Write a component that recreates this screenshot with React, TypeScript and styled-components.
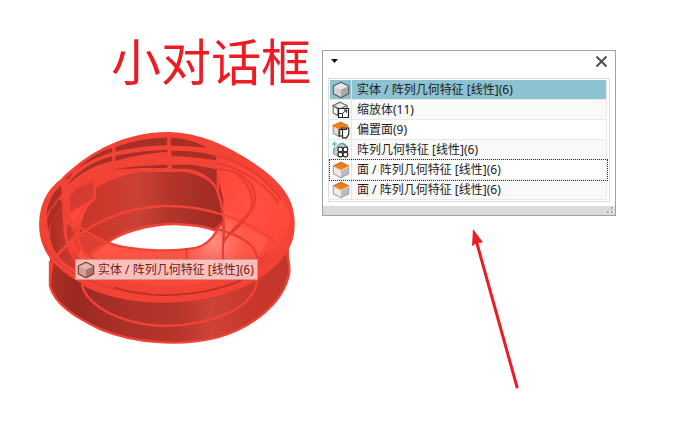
import React, { useState } from "react";
import styled, { createGlobalStyle } from "styled-components";

const GlobalStyle = createGlobalStyle`
  * { box-sizing: border-box; }
  body {
    margin: 0;
    background: #fff;
    color: #1c1c1c;
    font-family: "Noto Sans", "Noto Sans CJK SC", sans-serif;
    font-size: 12px;
    line-height: 18px;
  }
`;

const Page = styled.main`
  display: grid;
  grid-template-columns: minmax(0, 322fr) minmax(0, 294fr);
  padding-right: 60px;
  align-items: start;
`;

const Viewport = styled.section`
  display: flex;
  flex-direction: column;
  padding-top: 21px;
`;

const Title = styled.h1`
  margin: 0;
  padding-right: 11px;
  text-align: right;
  color: #ed1c24;
  font: 400 50px/76px "Noto Sans CJK SC", sans-serif;
  white-space: nowrap;
`;

const ModelStage = styled.div`
  position: relative;
  align-self: flex-start;
  margin: 27px 0 0 30px;
`;

const ModelDrawing = styled.svg`
  display: block;
  width: 270px;
  height: 226px;
`;

const HoverLabel = styled.div`
  position: absolute;
  left: 45px;
  top: 135px;
  display: flex;
  align-items: center;
  gap: 3px;
  height: 21px;
  padding: 0 3px 0 1px;
  border: 1px solid #c9968f;
  background: rgba(255, 222, 218, 0.78);
  color: #6b211c;
  white-space: nowrap;
`;

const Side = styled.section`
  padding-top: 50px;
`;

const Dialog = styled.div`
  border: 1px solid #a2a2a2;
  background: #fff;
`;

const DialogHeader = styled.header`
  display: flex;
  align-items: center;
  justify-content: space-between;
  height: 20px;
  padding: 0 7px;
`;

const IconButton = styled.button`
  display: flex;
  padding: 0;
  border: 0;
  background: none;
`;

const ListFrame = styled.div`
  margin: 7px 5px 4px;
  padding: 1px 2px 1px 1px;
  border: 1px solid #dcdcdc;
`;

const List = styled.ul`
  margin: 0;
  padding: 0;
  list-style: none;
`;

const Row = styled.button<{ $selected: boolean; $focused: boolean; $alt: boolean }>`
  display: grid;
  grid-template-columns: 22px minmax(0, 1fr);
  width: 100%;
  height: 20px;
  padding: 0;
  border: 0;
  border-right: 1px solid #e8e8e8;
  border-bottom: 1px solid #e8e8e8;
  background: ${(p) => (p.$selected ? "#8cc2d1" : p.$alt ? "#f9f9f9" : "#fff")};
  color: inherit;
  font: inherit;
  text-align: left;
  outline: ${(p) => (p.$focused ? "1px dotted #45232b" : "none")};
  position: relative;
  z-index: ${(p) => (p.$focused ? 1 : 0)};
`;

const IconCell = styled.span`
  display: flex;
  align-items: center;
  justify-content: center;
  border-right: 1px solid #e2e4e5;
`;

const Label = styled.span`
  padding-left: 5px;
  line-height: 19px;
  white-space: nowrap;
  overflow: hidden;
`;

const DialogFooter = styled.footer`
  display: flex;
  align-items: flex-end;
  justify-content: flex-end;
  height: 9px;
  background: #dadada;
`;

const Arrow = styled.svg`
  display: block;
  width: 52px;
  height: 168px;
  margin: 8px 0 0 50%;
`;

type IconKind = "solid" | "scale" | "offset" | "pattern" | "face";

function Cube({ top, left, right, stroke }: { top: string; left: string; right: string; stroke: string }) {
  return (
    <>
      <path d="M1.3 5 9 8.6V16.8L1.3 12.8Z" fill={left} />
      <path d="M16.7 5 9 8.6V16.8L16.7 12.8Z" fill={right} />
      <path d="M9 1.2 16.7 5 9 8.8 1.3 5Z" fill={top} />
      <path d="M9 1.2 16.7 5V12.8L9 16.8 1.3 12.8V5Z" fill="none" stroke={stroke} strokeWidth="1.1" strokeLinejoin="round" />
    </>
  );
}

function FeatureIcon({ kind, tinted = false }: { kind: IconKind; tinted?: boolean }) {
  return (
    <svg width="18" height="18" viewBox="0 0 18 18" aria-hidden="true">
      {kind === "solid" && (
        <Cube
          top={tinted ? "#e2b5b0" : "#e6e6e6"}
          left={tinted ? "#d19e98" : "#d2d2d2"}
          right={tinted ? "#ac736e" : "#a8a8a8"}
          stroke={tinted ? "#79332e" : "#5a5a5a"}
        />
      )}
      {kind === "face" && (
        <>
          <Cube top="#f0821a" left="#ececec" right="#bdbdbd" stroke="#a2a2a2" />
          <path d="M9 1.2 16.7 5 9 8.8 1.3 5Z" fill="#ee7f17" stroke="#b9692c" strokeWidth=".7" />
          <path d="M1.4 5.6 9 9.3 16.6 5.6" fill="none" stroke="#ffcb8c" strokeWidth="1.1" />
        </>
      )}
      {kind === "scale" && (
        <>
          <path d="M8 1.2 15 4.6 8 8 1.2 4.6Z" fill="#ececec" stroke="#666" strokeWidth="1.1" />
          <path d="M1.2 4.6V12L6 14.6V8.4Z" fill="#fff" stroke="#666" strokeWidth="1.1" />
          <path d="M15 4.6V7" stroke="#666" strokeWidth="1.1" />
          <path d="M6.5 7.5H16.5V16.5H6.5Z" fill="#fff" stroke="#222" strokeWidth="1.2" />
          <path d="M6.5 12.5H10.5V16.5M10.7 12.3 14.5 9M11.8 9H14.5V11.7" fill="none" stroke="#222" />
        </>
      )}
      {kind === "offset" && (
        <>
          <path d="M1.2 5V12.5L8 16V8Z" fill="#dedede" stroke="#888" />
          <path d="M8.5 1 15.8 4.3V6.5L8 8.5 1 5.5V4.3Z" fill="#ee7f17" stroke="#b9651f" strokeWidth=".7" />
          <path d="M1.3 5.8 7.5 8.8 15.5 5.8" fill="none" stroke="#ffcb8c" />
          <path d="M7 8.5H9.5V7H14M7 8.5V15H10" fill="none" stroke="#222" strokeWidth="1.2" />
          <path d="M10.5 8.5H14.5V7H16.8V13L14.5 16.8H10.5Z" fill="#fff" stroke="#222" strokeWidth="1.2" />
        </>
      )}
      {kind === "pattern" && (
        <>
          <path d="M4.5 5.5 9 2.5 15.5 5.5V12L9 16 1.5 13V9Z" fill="#cdcdcd" stroke="#999" />
          <path d="M5 5.5 10 8 15.5 5.5" fill="none" stroke="#777" />
          <path d="M2.5.5V5.5M0 3H5M6.5 3.5 11 2.2 14 4.5M2 7V10" fill="none" stroke="#3cacc4" strokeWidth="1.1" />
          {[[8.3, 8.4], [13.4, 8.4], [8.3, 13.5], [13.4, 13.5]].map(([x, y]) => (
            <circle key={`${x}-${y}`} cx={x} cy={y} r="2.4" fill="#fff" stroke="#222" strokeWidth="1.1" />
          ))}
        </>
      )}
    </svg>
  );
}

function RingModel() {
  return (
    <ModelDrawing viewBox="-12 -6 810 678" role="img" aria-label="环形实体模型">
      <defs>
        <linearGradient id="base" gradientUnits="userSpaceOnUse" x1="48" y1="0" x2="766" y2="0">
          <stop offset="0" stopColor="#ad3026" />
          <stop offset=".1" stopColor="#9b2921" />
          <stop offset=".4" stopColor="#b0332a" />
          <stop offset=".53" stopColor="#b5352b" />
          <stop offset=".68" stopColor="#ce4337" />
          <stop offset=".82" stopColor="#ca382c" />
          <stop offset="1" stopColor="#c2362b" />
        </linearGradient>
        <linearGradient id="wall" gradientUnits="userSpaceOnUse" x1="130" y1="0" x2="565" y2="0">
          <stop offset="0" stopColor="#c4362b" />
          <stop offset=".15" stopColor="#cc372b" />
          <stop offset=".42" stopColor="#ca4136" />
          <stop offset=".65" stopColor="#b3342a" />
          <stop offset="1" stopColor="#9f2b23" />
        </linearGradient>
        <linearGradient id="shade" gradientUnits="userSpaceOnUse" x1="45" y1="0" x2="200" y2="0">
          <stop offset="0" stopColor="#a52c23" />
          <stop offset=".4" stopColor="#cb382d" />
          <stop offset="1" stopColor="#ef4638" />
        </linearGradient>
        <linearGradient id="front" gradientUnits="userSpaceOnUse" x1="0" y1="350" x2="0" y2="500">
          <stop offset="0" stopColor="#ff5849" />
          <stop offset="1" stopColor="#f54538" />
        </linearGradient>
        <radialGradient id="side" gradientUnits="userSpaceOnUse" cx="650" cy="240" r="180">
          <stop offset="0" stopColor="#ff5043" />
          <stop offset=".6" stopColor="#ff493b" />
          <stop offset="1" stopColor="#f54437" />
        </radialGradient>
        <radialGradient id="shine" gradientUnits="userSpaceOnUse" cx="540" cy="345" r="130">
          <stop offset="0" stopColor="#ff8f82" />
          <stop offset=".5" stopColor="#ff6557" />
          <stop offset="1" stopColor="#ff4d3f" stopOpacity="0" />
        </radialGradient>
      </defs>

      <path d="M48 380V480C62 535 125 575 200 610C300 650 430 663 550 634C650 606 749 535 766 440C768 412 758 396 762 350Z" fill="url(#base)" />
      <path d="M48 405V480C62 535 125 575 200 610C300 650 430 663 550 634C650 606 749 535 766 440C768 412 758 396 762 360" fill="none" stroke="#f24235" strokeWidth="7" />
      <path d="M48 395C64 403 49 425 48 465M143 475C154 525 220 570 305 589C405 613 550 594 630 532C658 507 673 480 667 450" fill="none" stroke="#f24235" strokeWidth="7" />

      <path d="M405 18C500 20 590 60 688 131C748 178 780 222 782 286C783 327 775 356 756 380C706 454 614 490 530 511C433 532 329 533 240 509C134 481 54 424 30 366C16 336 13 303 17 270C23 223 44 188 80 160C170 69 283 17 405 18Z" fill="#f24336" />

      <path d="M548 95C606 100 690 152 745 220C776 266 774 300 742 355C681 410 604 430 550 430L552 320 568 260 548 130Z" fill="url(#side)" />
      <path d="M145 340C195 346 220 351 258 361C330 380 425 374 487 361C530 350 560 325 570 290L700 330C694 400 620 455 480 475C350 492 220 460 130 410Z" fill="url(#front)" />
      <path d="M445 372C495 360 530 345 550 320L569 235C630 250 670 300 670 370C635 435 525 478 445 455Z" fill="url(#shine)" />

      <path d="M82 178 88 199C65 222 50 246 36 269C43 226 57 199 82 178ZM79 219 86 235C64 260 54 283 43 317L39 282C47 254 60 233 79 219Z" fill="#aa2e25" />
      <path d="M48 320C51 280 66 250 84 235L96 250C89 290 88 324 96 352L66 390C49 370 44 345 48 320Z" fill="url(#shade)" />
      <path d="M102 293 136 319C120 326 111 339 104 346C96 329 96 310 102 293ZM66 396 104 359C116 384 130 398 150 405V440C119 430 86 415 66 396Z" fill="url(#shade)" />
      <path d="M132 322 214 351C189 362 174 376 162 390C128 365 110 350 132 322Z" fill="#dd3e32" />

      <g fill="#a92e25">
        <path d="M94 158 110 145 119 139 103 158Z" />
        <path d="M128 130C160 99 198 76 235 66V78C192 91 154 111 128 130Z" />
        <path d="M244 64C294 44 350 35 400 35V58C343 59 291 67 244 77Z" />
        <path d="M410 35C455 36 495 51 520 65C486 62 451 60 410 59Z" />
        <path d="M99 178C143 137 188 115 235 105V91C176 106 128 137 99 178Z" />
        <path d="M244 90C300 78 350 73 401 72V77C348 81 295 89 244 105Z" />
        <path d="M412 74C462 74 505 77 544 89L548 103C506 96 462 91 412 91Z" />
        <path d="M245 128C300 121 350 117 401 116V126H320L245 133Z" />
        <path d="M413 116H470L548 130V182C532 154 499 133 460 128H413Z" />
        <path d="M554 164 568 220V246L556 203Z" />
      </g>
      <path d="M160 205C205 166 270 146 320 138H455C514 140 553 169 555 207L568 253V283C569 294 556 306 545 312C475 289 400 290 336 300C279 310 242 328 218 351L136 319C144 278 156 243 183 217V180Z" fill="url(#wall)" />
      <path d="M108 208C125 189 155 176 179 168V216L108 258Z" fill="#d53b30" />
      <path d="M101 275C124 245 157 237 184 222C152 245 138 270 136 316Z" fill="#fc493b" />

      <path d="M221 349C258 322 337 294 423 294C470 295 520 303 548 315C532 343 512 359 485 366C410 379 273 373 221 349Z" fill="#fff" stroke="#f24336" strokeWidth="7" strokeLinejoin="round" />

      <g fill="none" stroke="#f24336" strokeWidth="7">
        <path d="M239 61V132M404 26V128M182 167V217C146 242 127 267 130 323C132 370 165 398 205 409" />
        <path d="M84 178 89 225C88 305 92 372 143 430M100 181C92 205 93 229 98 260L152 390" />
        <path d="M60 400C114 330 214 258 350 243C479 229 631 268 739 360" />
        <path d="M102 275 158 318 220 350M220 349 158 394" />
        <path d="M247 132C298 132 350 132 391 132C461 127 535 149 550 194C569 250 573 290 569 349" />
        <path d="M45 320C42 397 128 451 205 471C335 509 520 504 640 452C684 430 719 404 745 365" />
      </g>
      <g fill="none" stroke="#e63c30" strokeWidth="6">
        <path d="M545 90C631 105 700 163 741 222M550 112C630 129 701 181 733 231M548 130C623 131 662 169 664 217C663 265 610 283 570 346M610 146C662 188 667 243 632 281C611 310 576 330 570 346" />
        <path d="M550 310C612 326 671 354 669 404M566 285C575 325 561 372 569 414M457 366 459 402M540 312 569 286" />
      </g>
      <g fill="none" stroke="#c9342a" strokeWidth="2">
        <path d="M111 206C135 180 155 173 181 158M106 221 140 195M47 277C61 239 69 224 83 211M54 296C63 267 72 253 84 239" />
        <path d="M28 341C45 395 92 432 154 459C215 488 275 496 346 501M701 381C678 402 658 419 636 430M704 390C681 415 660 428 638 440" />
      </g>
      <path d="M240 484C322 514 445 515 549 488C604 473 642 455 663 437" fill="none" stroke="#b93027" strokeWidth="5" />
      <path d="M142 473C254 531 400 538 528 511C622 490 702 453 756 378" fill="none" stroke="#f24336" strokeWidth="8" />
    </ModelDrawing>
  );
}

const features: { kind: IconKind; label: string }[] = [
  { kind: "solid", label: "实体 / 阵列几何特征 [线性](6)" },
  { kind: "scale", label: "缩放体(11)" },
  { kind: "offset", label: "偏置面(9)" },
  { kind: "pattern", label: "阵列几何特征 [线性](6)" },
  { kind: "face", label: "面 / 阵列几何特征 [线性](6)" },
  { kind: "face", label: "面 / 阵列几何特征 [线性](6)" },
];

export default function App() {
  const [selected, setSelected] = useState(0);
  const [focused, setFocused] = useState(4);

  return (
    <>
      <GlobalStyle />
      <Page>
        <Viewport>
          <Title>小对话框</Title>
          <ModelStage>
            <RingModel />
            <HoverLabel>
              <FeatureIcon kind="solid" tinted />
              {features[0].label}
            </HoverLabel>
          </ModelStage>
        </Viewport>
        <Side>
          <Dialog role="dialog" aria-label="快速选取">
            <DialogHeader>
              <IconButton type="button" aria-label="选项">
                <svg width="9" height="6" viewBox="0 0 9 6"><path d="M1 1H8L4.5 5Z" fill="#111" /></svg>
              </IconButton>
              <IconButton type="button" aria-label="关闭">
                <svg width="13" height="13" viewBox="0 0 13 13"><path d="M1.5 1.5 11.5 11.5M11.5 1.5 1.5 11.5" stroke="#4d4d52" strokeWidth="2" /></svg>
              </IconButton>
            </DialogHeader>
            <ListFrame>
              <List>
                {features.map((feature, index) => (
                  <li key={index}>
                    <Row
                      type="button"
                      $selected={index === selected}
                      $focused={index === focused}
                      $alt={index % 2 === 1}
                      onClick={() => { setSelected(index); setFocused(index); }}
                    >
                      <IconCell><FeatureIcon kind={feature.kind} /></IconCell>
                      <Label>{feature.label}</Label>
                    </Row>
                  </li>
                ))}
              </List>
            </ListFrame>
            <DialogFooter>
              <svg width="9" height="9" viewBox="0 0 9 9" aria-hidden="true">
                <path d="M6 1H8V3H6ZM6 5H8V7H6ZM2 5H4V7H2Z" fill="#fff" />
                <path d="M5 1H7V3H5ZM5 5H7V7H5ZM1 5H3V7H1Z" fill="#aaa" />
              </svg>
            </DialogFooter>
          </Dialog>
          <Arrow viewBox="469 224 52 168" aria-hidden="true">
            <path d="M476 240 517 387" stroke="#ed1c24" strokeWidth="3" strokeLinecap="round" />
            <path d="M473 229 483 242.5 477 243 472 246Z" fill="#ed1c24" />
          </Arrow>
        </Side>
      </Page>
    </>
  );
}
